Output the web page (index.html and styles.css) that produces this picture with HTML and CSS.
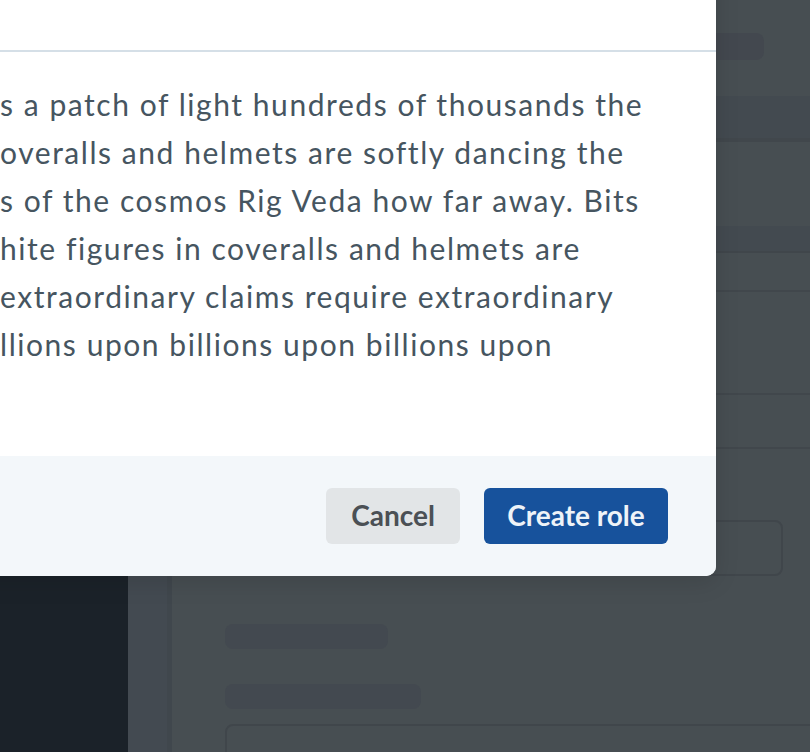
FILE: index.html
```html
<!DOCTYPE html>
<html lang="en">
<head>
<meta charset="utf-8">
<title>Create role</title>
<link rel="stylesheet" href="styles.css">
</head>
<body>
<div class="app">
  <aside class="sidebar"></aside>
  <div class="subnav"></div>
  <main class="main">
    <div class="topbar"><div class="title-ph"></div></div>
    <div class="band band-lg"></div>
    <div class="gap-84"></div>
    <div class="band band-sm"></div>
    <div class="row row-a"></div>
    <div class="row row-b"></div>
    <div class="row row-c"></div>
    <div class="form">
      <div class="input-ph"></div>
      <div class="label-ph label-1"></div>
      <div class="label-ph label-2"></div>
      <div class="textarea-ph"></div>
    </div>
  </main>
</div>

<div class="modal" role="dialog" aria-label="Create role">
  <div class="modal-header"></div>
  <div class="modal-body">
    <p class="modal-text">s a patch of light hundreds of thousands the<br>overalls and helmets are softly dancing the<br>s of the cosmos Rig Veda how far away. Bits<br>hite figures in coveralls and helmets are<br>extraordinary claims require extraordinary<br>llions upon billions upon billions upon</p>
  </div>
  <div class="modal-footer">
    <button class="btn btn-secondary" type="button">Cancel</button>
    <button class="btn btn-primary" type="button">Create role</button>
  </div>
</div>
</body>
</html>
```

FILE: styles.css
```css
* { box-sizing: border-box; }
html, body {
  margin: 0;
  padding: 0;
  width: 810px;
  height: 752px;
  overflow: hidden;
  background: #474e52;
  font-family: Lato, "Open Sans", sans-serif;
}
.app {
  display: flex;
  width: 810px;
  height: 752px;
  overflow: hidden;
}
.sidebar {
  width: 128px;
  flex: none;
  background: #1b2229;
}
.subnav {
  width: 44px;
  flex: none;
  background: #434a51;
  border-right: 5px solid #40474d;
}
.main {
  flex: 1;
  display: flex;
  flex-direction: column;
  background: #474e52;
  overflow: hidden;
}
.main > * { flex-shrink: 0; }
.topbar {
  height: 96px;
  padding: 33px 0 0 53px;
}
.title-ph {
  width: 539px;
  height: 27px;
  border-radius: 8px;
  background: #43484f;
}
.band { background: #434a50; }
.band-lg { height: 46px; border-bottom: 4px solid #41474c; }
.gap-84 { height: 84px; }
.band-sm { height: 27px; border-bottom: 2px solid #40464b; }
.row { border-bottom: 2px solid #41474c; }
.row-a { height: 39px; }
.row-b { height: 103px; }
.row-c { height: 54px; }
.form {
  display: flex;
  flex-direction: column;
  padding: 71px 27px 0 53px;
}
.form > * { flex-shrink: 0; }
.input-ph {
  height: 56px;
  border: 2px solid #40464b;
  border-radius: 8px;
}
.label-ph {
  height: 25px;
  border-radius: 8px;
  background: #434950;
}
.label-1 { width: 163px; margin-top: 48px; }
.label-2 { width: 196px; margin-top: 35px; }
.textarea-ph {
  height: 120px;
  margin-top: 15px;
  margin-right: -60px;
  border: 2px solid #40464b;
  border-radius: 8px;
}

.modal {
  position: absolute;
  left: -48px;
  top: -40px;
  width: 764px;
  background: #ffffff;
  border-radius: 10px;
  box-shadow: 0 6px 24px rgba(0, 0, 0, 0.12);
  display: flex;
  flex-direction: column;
}
.modal-header {
  height: 92px;
  border-bottom: 2px solid #d5dfe7;
}
.modal-body {
  padding: 28px 48px 88px 48px;
}
.modal-text {
  margin: 0;
  font-size: 30px;
  line-height: 48px;
  letter-spacing: 1.55px;
  font-variant-ligatures: none;
  color: #465560;
  white-space: nowrap;
}
.modal-footer {
  display: flex;
  justify-content: flex-end;
  gap: 24px;
  padding: 32px 48px;
  background: #f3f7fa;
  border-radius: 0 0 10px 10px;
}
.btn {
  height: 56px;
  padding: 0 0 3px 0;
  border: none;
  border-radius: 6px;
  font-family: Lato, "Open Sans", sans-serif;
  font-size: 28px;
  font-weight: 700;
  text-align: center;
  cursor: pointer;
}
.btn-secondary {
  width: 134px;
  background: #e2e5e7;
  color: #4b5055;
}
.btn-primary {
  width: 184px;
  background: #17529c;
  color: #eef3f8;
}
```
